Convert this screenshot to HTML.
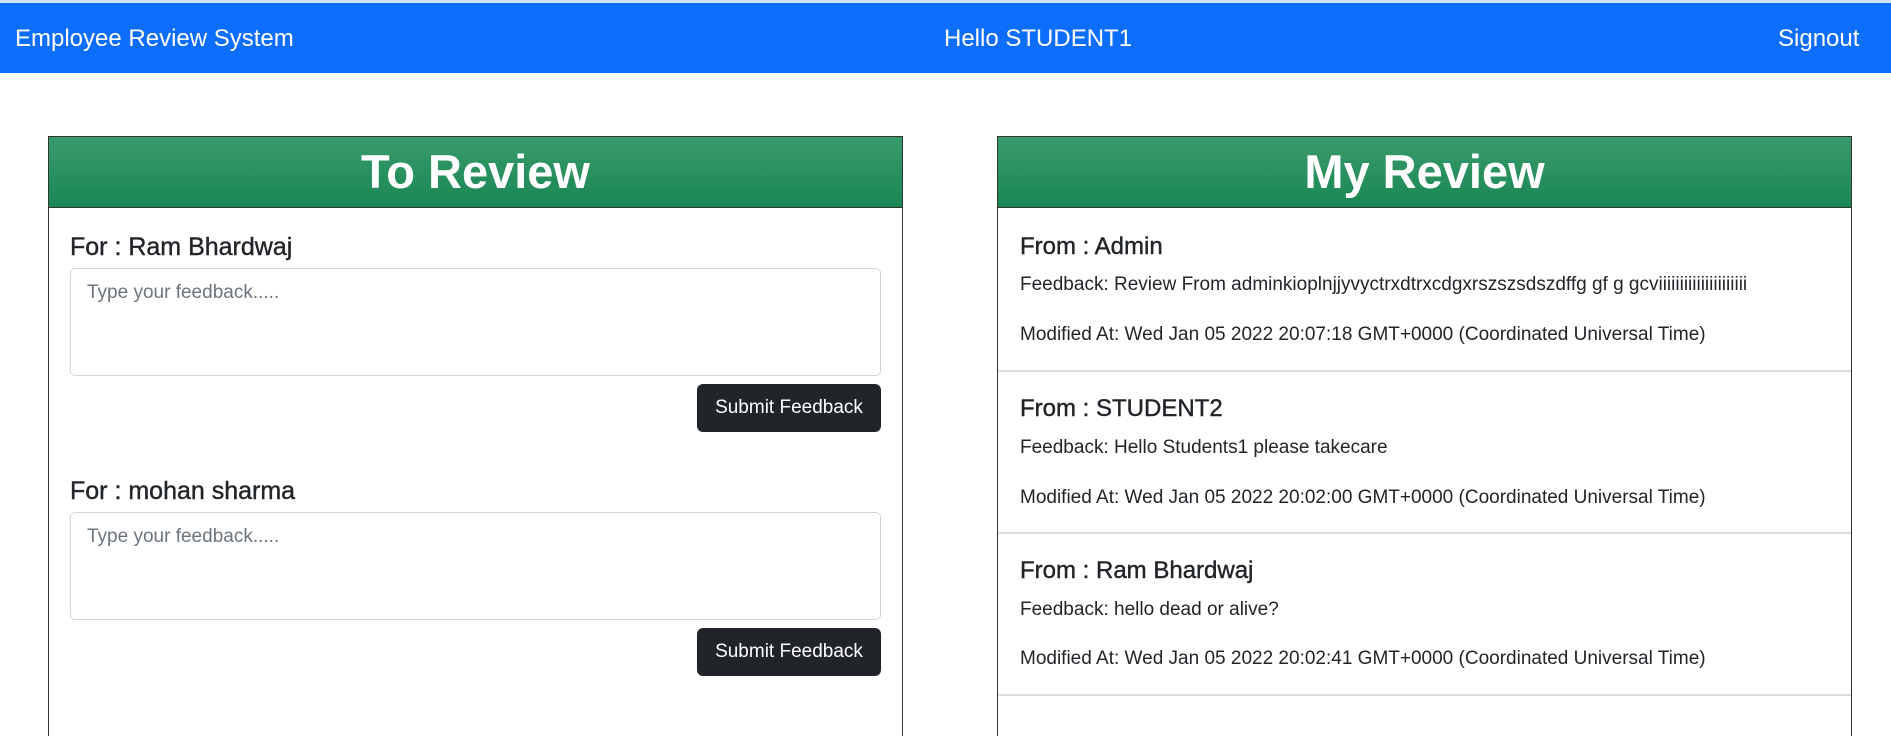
<!DOCTYPE html>
<html><head><meta charset="utf-8"><style>
*{box-sizing:border-box;margin:0;padding:0}
body{width:1891px;height:718px;overflow:hidden;background:#fff;font-family:"Liberation Sans",sans-serif;color:#212529;position:relative}
.top{position:absolute;top:0;left:0;width:1891px;height:3px;background:#cfe0f5}
.nav{position:absolute;top:3px;left:0;width:1891px;height:70px;background:#0d6efd;color:#fff;font-size:24px}
.nav span{position:absolute;top:22px}
.card{position:absolute;top:136px;border:1px solid #333;border-bottom:none;height:600px;background:#fff}
.hd{height:71px;background:linear-gradient(#3a9a6c,#198754);border-bottom:1px solid #333;color:#fff;text-align:center;font-weight:bold;font-size:47px;line-height:70px}
.for{position:absolute;left:21px;font-size:25px;font-weight:500;-webkit-text-stroke:0.4px #212529}
.ta{position:absolute;left:21px;width:811px;height:108px;border:1px solid #ced4da;border-radius:5px;color:#6c757d;font-size:19px;padding:13px 16px}
.btn{position:absolute;left:648px;width:184px;height:48px;background:#212529;color:#fff;border-radius:6px;font-size:19px;text-align:center;line-height:48px}
.it{position:absolute;left:0;width:853px;border-bottom:2px solid #ddd}
.fr{position:absolute;left:22px;font-size:24px;-webkit-text-stroke:0.4px #212529}
.tx{position:absolute;left:22px;font-size:19px}
</style></head><body>
<div class="top"></div>
<div class="nav"><span style="left:15px">Employee Review System</span><span style="left:944px">Hello STUDENT1</span><span style="left:1778px">Signout</span></div>

<div class="card" style="left:48px;width:855px">
<div class="hd">To Review</div>
<div class="for" style="top:96px">For : Ram Bhardwaj</div>
<div class="ta" style="top:131px">Type your feedback.....</div>
<div class="btn" style="top:247px">Submit Feedback</div>
<div class="for" style="top:340px">For : mohan sharma</div>
<div class="ta" style="top:375px">Type your feedback.....</div>
<div class="btn" style="top:491px">Submit Feedback</div>
</div>

<div class="card" style="left:997px;width:855px">
<div class="hd">My Review</div>
<div class="it" style="top:0;height:235px"></div>
<div class="fr" style="top:96px">From : Admin</div>
<div class="tx" style="top:137px">Feedback: Review From adminkioplnjjyvyctrxdtrxcdgxrszszsdszdffg gf g gcviiiiiiiiiiiiiiiiiiiii</div>
<div class="tx" style="top:187px">Modified At: Wed Jan 05 2022 20:07:18 GMT+0000 (Coordinated Universal Time)</div>
<div class="it" style="top:235px;height:162px"></div>
<div class="fr" style="top:258px">From : STUDENT2</div>
<div class="tx" style="top:300px">Feedback: Hello Students1 please takecare</div>
<div class="tx" style="top:350px">Modified At: Wed Jan 05 2022 20:02:00 GMT+0000 (Coordinated Universal Time)</div>
<div class="it" style="top:397px;height:162px"></div>
<div class="fr" style="top:420px">From : Ram Bhardwaj</div>
<div class="tx" style="top:462px">Feedback: hello dead or alive?</div>
<div class="tx" style="top:511px">Modified At: Wed Jan 05 2022 20:02:41 GMT+0000 (Coordinated Universal Time)</div>
</div>
</body></html>
